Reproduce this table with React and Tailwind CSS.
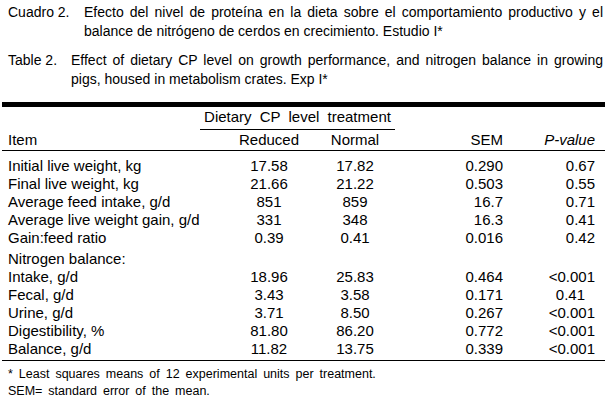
import React from "react";

const growth = [
  ["Initial live weight, kg", "17.58", "17.82", "0.290", "0.67"],
  ["Final live weight, kg", "21.66", "21.22", "0.503", "0.55"],
  ["Average feed intake, g/d", "851", "859", "16.7", "0.71"],
  ["Average live weight gain, g/d", "331", "348", "16.3", "0.41"],
  ["Gain:feed ratio", "0.39", "0.41", "0.016", "0.42"],
];

const nitrogen = [
  ["Intake, g/d", "18.96", "25.83", "0.464", "<0.001"],
  ["Fecal, g/d", "3.43", "3.58", "0.171", "0.41"],
  ["Urine, g/d", "3.71", "8.50", "0.267", "<0.001"],
  ["Digestibility, %", "81.80", "86.20", "0.772", "<0.001"],
  ["Balance, g/d", "11.82", "13.75", "0.339", "<0.001"],
];

function Caption({ label, labelWidth, first, second, className = "" }) {
  return (
    <div className={`flex leading-[19px] ${className}`}>
      <div className={`shrink-0 ${labelWidth}`}>{label}</div>
      <div className="flex-1">
        <div className="text-justify [text-align-last:justify]">{first}</div>
        <div>{second}</div>
      </div>
    </div>
  );
}

function Row({ cells, pShift = false, className = "" }) {
  return (
    <div className={`grid grid-cols-[220px_94px_78px_109px_94px] leading-[18px] ${className}`}>
      <div className="pl-[6px] whitespace-nowrap">{cells[0]}</div>
      <div className="text-center">{cells[1]}</div>
      <div className="text-center">{cells[2]}</div>
      <div className="text-right">{cells[3]}</div>
      <div className={`text-right ${pShift ? "pr-[12px]" : "pr-[2px]"}`}>{cells[4]}</div>
    </div>
  );
}

export default function App() {
  return (
    <div className="w-[605px] h-[408px] overflow-hidden bg-white text-black font-['Liberation_Sans',Arial,sans-serif]">
      <div className="pt-[3px] pl-2 pr-[2px] text-[14px]">
        <Caption
          label="Cuadro 2."
          labelWidth="w-[76px]"
          first="Efecto del nivel de proteína en la dieta sobre el comportamiento productivo y el"
          second="balance de nitrógeno de cerdos en crecimiento. Estudio I*"
        />
        <Caption
          className="mt-[10px]"
          label="Table 2."
          labelWidth="w-[63px]"
          first="Effect of dietary CP level on growth performance, and nitrogen balance in growing"
          second="pigs, housed in metabolism crates. Exp I*"
        />
      </div>

      <div className="mt-[13px] ml-[2px] border-t-[5px] border-black text-[15px]">
        <div className="flex pt-[1px]">
          <div className="w-[198px] shrink-0" />
          <div className="w-[195px] border-b border-black pb-[3px] text-center leading-[18px] [word-spacing:4px]">
            Dietary CP level treatment
          </div>
        </div>
        <Row
          className="pt-[1px] pb-[1px] border-b border-black"
          cells={["Item", "Reduced", "Normal", "SEM", <i key="p">P-value</i>]}
        />
        <div className="pt-[6px]">
          {growth.map((r) => (
            <Row key={r[0]} cells={r} />
          ))}
          <div className="pt-[3px] pl-[6px] leading-[18px]">Nitrogen balance:</div>
          {nitrogen.map((r) => (
            <Row key={r[0]} cells={r} pShift={r[0] === "Fecal, g/d"} />
          ))}
        </div>
        <div className="mt-[2px] border-t border-black" />
        <div className="pl-[6px] pt-[5px] text-[12.5px] leading-[17px] [word-spacing:2.5px]">
          <p>* Least squares means of 12 experimental units per treatment.</p>
          <p>SEM= standard error of the mean.</p>
        </div>
      </div>
    </div>
  );
}
